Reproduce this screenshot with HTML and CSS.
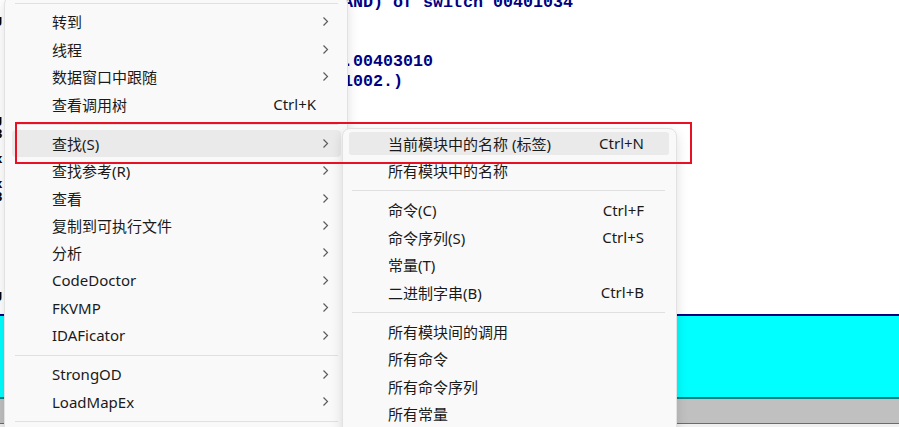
FILE: index.html
```html
<!DOCTYPE html>
<html lang="zh-CN">
<head>
<meta charset="utf-8">
<title>OllyDbg context menu</title>
<link rel="stylesheet" href="styles.css">
</head>
<body>
<div class="screen">
  <div class="view">
    <div class="pane">
      <div class="gutter">
        <div class="gutter-text">&nbsp;<br>J<br>&nbsp;<br>&nbsp;<br>&nbsp;<br>&nbsp;<br>&nbsp;<br>&nbsp;<br>&nbsp;<br>J<br>8<br>&nbsp;<br>x<br>&nbsp;<br>x<br>8<br>&nbsp;<br>&nbsp;<br>&nbsp;<br>&nbsp;<br>&nbsp;<br>&nbsp;<br>&nbsp;<br>J</div>
      </div>
      <div class="code">
        <div class="ln">AND) of switch 00401034</div>
        <div class="ln">&nbsp;</div>
        <div class="ln">&nbsp;</div>
        <div class="ln">.00403010</div>
        <div class="ln">1002.)</div>
      </div>
    </div>
    <div class="dump"></div>
    <div class="status"></div>
    <div class="foot"></div>
  </div>

  <div class="menu main">
    <div class="sep"></div>
    <div class="item"><span class="label">转到</span><span class="arrow"><svg width="7" height="11" viewBox="0 0 7 11"><path d="M1.5 1.5 L5.5 5.5 L1.5 9.5" fill="none" stroke="#5c5c5c" stroke-width="1.2"/></svg></span></div>
    <div class="item"><span class="label">线程</span><span class="arrow"><svg width="7" height="11" viewBox="0 0 7 11"><path d="M1.5 1.5 L5.5 5.5 L1.5 9.5" fill="none" stroke="#5c5c5c" stroke-width="1.2"/></svg></span></div>
    <div class="item"><span class="label">数据窗口中跟随</span><span class="arrow"><svg width="7" height="11" viewBox="0 0 7 11"><path d="M1.5 1.5 L5.5 5.5 L1.5 9.5" fill="none" stroke="#5c5c5c" stroke-width="1.2"/></svg></span></div>
    <div class="item"><span class="label">查看调用树</span><span class="key">Ctrl+K</span><span class="arrow"></span></div>
    <div class="sep"></div>
    <div class="item active"><span class="label">查找(S)</span><span class="arrow"><svg width="7" height="11" viewBox="0 0 7 11"><path d="M1.5 1.5 L5.5 5.5 L1.5 9.5" fill="none" stroke="#5c5c5c" stroke-width="1.2"/></svg></span></div>
    <div class="item"><span class="label">查找参考(R)</span><span class="arrow"><svg width="7" height="11" viewBox="0 0 7 11"><path d="M1.5 1.5 L5.5 5.5 L1.5 9.5" fill="none" stroke="#5c5c5c" stroke-width="1.2"/></svg></span></div>
    <div class="item"><span class="label">查看</span><span class="arrow"><svg width="7" height="11" viewBox="0 0 7 11"><path d="M1.5 1.5 L5.5 5.5 L1.5 9.5" fill="none" stroke="#5c5c5c" stroke-width="1.2"/></svg></span></div>
    <div class="item"><span class="label">复制到可执行文件</span><span class="arrow"><svg width="7" height="11" viewBox="0 0 7 11"><path d="M1.5 1.5 L5.5 5.5 L1.5 9.5" fill="none" stroke="#5c5c5c" stroke-width="1.2"/></svg></span></div>
    <div class="item"><span class="label">分析</span><span class="arrow"><svg width="7" height="11" viewBox="0 0 7 11"><path d="M1.5 1.5 L5.5 5.5 L1.5 9.5" fill="none" stroke="#5c5c5c" stroke-width="1.2"/></svg></span></div>
    <div class="item"><span class="label">CodeDoctor</span><span class="arrow"><svg width="7" height="11" viewBox="0 0 7 11"><path d="M1.5 1.5 L5.5 5.5 L1.5 9.5" fill="none" stroke="#5c5c5c" stroke-width="1.2"/></svg></span></div>
    <div class="item"><span class="label">FKVMP</span><span class="arrow"><svg width="7" height="11" viewBox="0 0 7 11"><path d="M1.5 1.5 L5.5 5.5 L1.5 9.5" fill="none" stroke="#5c5c5c" stroke-width="1.2"/></svg></span></div>
    <div class="item"><span class="label">IDAFicator</span><span class="arrow"><svg width="7" height="11" viewBox="0 0 7 11"><path d="M1.5 1.5 L5.5 5.5 L1.5 9.5" fill="none" stroke="#5c5c5c" stroke-width="1.2"/></svg></span></div>
    <div class="sep"></div>
    <div class="item"><span class="label">StrongOD</span><span class="arrow"><svg width="7" height="11" viewBox="0 0 7 11"><path d="M1.5 1.5 L5.5 5.5 L1.5 9.5" fill="none" stroke="#5c5c5c" stroke-width="1.2"/></svg></span></div>
    <div class="item"><span class="label">LoadMapEx</span><span class="arrow"><svg width="7" height="11" viewBox="0 0 7 11"><path d="M1.5 1.5 L5.5 5.5 L1.5 9.5" fill="none" stroke="#5c5c5c" stroke-width="1.2"/></svg></span></div>
    <div class="sep"></div>
  </div>

  <div class="menu sub">
    <div class="item active"><span class="label">当前模块中的名称 (标签)</span><span class="key">Ctrl+N</span></div>
    <div class="item"><span class="label">所有模块中的名称</span></div>
    <div class="sep"></div>
    <div class="item"><span class="label">命令(C)</span><span class="key">Ctrl+F</span></div>
    <div class="item"><span class="label">命令序列(S)</span><span class="key">Ctrl+S</span></div>
    <div class="item"><span class="label">常量(T)</span></div>
    <div class="item"><span class="label">二进制字串(B)</span><span class="key">Ctrl+B</span></div>
    <div class="sep"></div>
    <div class="item"><span class="label">所有模块间的调用</span></div>
    <div class="item"><span class="label">所有命令</span></div>
    <div class="item"><span class="label">所有命令序列</span></div>
    <div class="item"><span class="label">所有常量</span></div>
  </div>

  <div class="annot"></div>
</div>
</body>
</html>
```
FILE: styles.css
```css
* { box-sizing: border-box; }

html, body {
  margin: 0;
  padding: 0;
  background: #ffffff;
}

.screen {
  position: relative;
  width: 899px;
  height: 427px;
  overflow: hidden;
  background: #ffffff;
}

.view {
  display: flex;
  flex-direction: column;
  width: 100%;
  height: 100%;
}

.pane {
  display: flex;
  align-items: flex-start;
  height: 314px;
  overflow: hidden;
}

.gutter {
  width: 4px;
  overflow: hidden;
  flex: none;
}

.gutter-text {
  margin-left: -5px;
  padding-top: 3px;
  font: bold 13px/12.5px "Liberation Sans", sans-serif;
  color: #000000;
  white-space: nowrap;
}

.code {
  flex: 1;
  padding-left: 339px;
  margin-top: -7px;
  font: bold 16.67px/19.8px "Liberation Mono", monospace;
  color: #000080;
}

.ln {
  height: 19.8px;
  white-space: pre;
}

.dump {
  height: 85px;
  background: #00ffff;
  border-top: 2px solid #000080;
  border-bottom: 2px solid #008080;
}

.status {
  height: 25px;
  background: #c0c0c0;
  border-bottom: 1px solid #6b6b6b;
}

.foot {
  flex: 1;
  background: #f0f0f0;
}

/* context menus */
.menu {
  position: absolute;
  z-index: 1;
  background: #f9f9f9;
  border: 1px solid #e2e2e2;
  border-radius: 8px;
  box-shadow: 0 4px 12px rgba(0, 0, 0, 0.13);
  font-family: "Noto Sans", "Noto Sans CJK SC", sans-serif;
  font-size: 15px;
  color: #1a1a1a;
}

.main {
  left: 4px;
  top: -4.5px;
  width: 344px;
  height: 450px;
}

.sub {
  left: 342px;
  top: 128px;
  width: 335px;
  height: 320px;
  padding-top: 0.6px;
}

.item {
  display: flex;
  align-items: center;
  height: 27.4px;
  border-radius: 4px;
  white-space: nowrap;
}

.main .item {
  margin: 0 6px 0 7px;
  padding: 0 12px 0 40px;
}

.sub .item {
  margin: 0 7px 0 6px;
  padding: 0 25px 0 39px;
  border: solid transparent;
  border-width: 2px 0;
  background-clip: padding-box;
}

.item.active {
  background-color: #eaeaea;
}

.label {
  flex: 1;
}

.key {
  flex: none;
}

.arrow {
  flex: none;
  width: 7px;
  height: 11px;
  margin-left: 6px;
  display: flex;
}

.sep {
  height: 1px;
  background: #e0e0e0;
}

.main .sep {
  margin: 6px 9px 4.8px 10px;
}

.sub .sep {
  margin: 6px 11px 4.8px 9px;
}

.annot {
  position: absolute;
  z-index: 2;
  left: 15px;
  top: 122px;
  width: 677px;
  height: 42px;
  border: 2px solid #e81123;
}
```
